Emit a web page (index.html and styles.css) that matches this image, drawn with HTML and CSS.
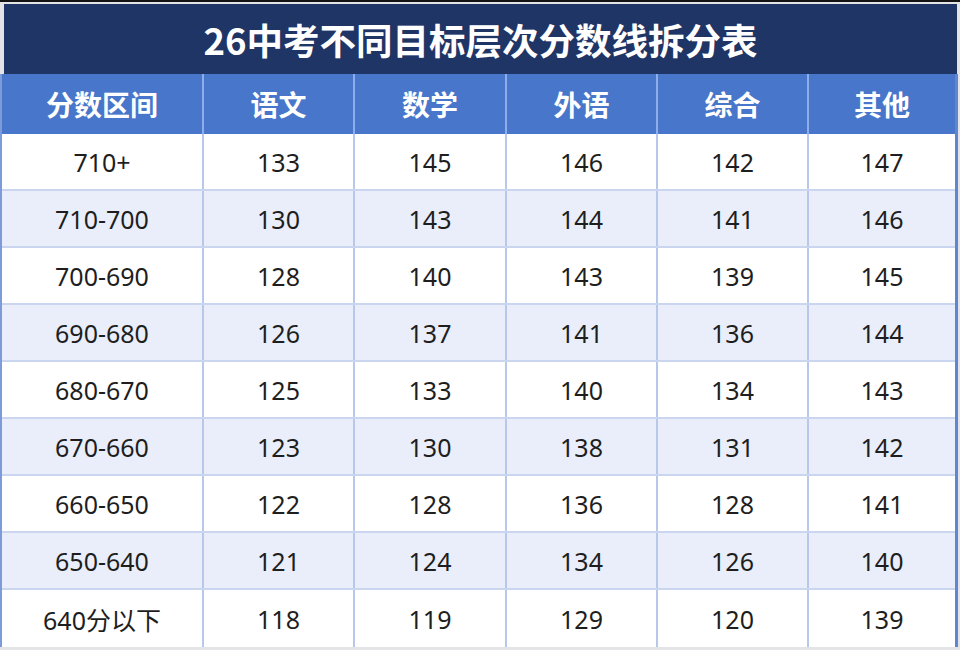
FILE: index.html
```html
<!DOCTYPE html>
<html lang="zh-CN">
<head>
<meta charset="utf-8">
<title>26中考不同目标层次分数线拆分表</title>
<link rel="stylesheet" href="styles.css">
</head>
<body>
<div class="page">
  <div class="title">26中考不同目标层次分数线拆分表</div>
  <div class="table">
    <div class="row head">
      <div class="cell">分数区间</div><div class="cell">语文</div><div class="cell">数学</div><div class="cell">外语</div><div class="cell">综合</div><div class="cell">其他</div>
    </div>
    <div class="row">
      <div class="cell">710+</div><div class="cell">133</div><div class="cell">145</div><div class="cell">146</div><div class="cell">142</div><div class="cell">147</div>
    </div>
    <div class="row alt">
      <div class="cell">710-700</div><div class="cell">130</div><div class="cell">143</div><div class="cell">144</div><div class="cell">141</div><div class="cell">146</div>
    </div>
    <div class="row">
      <div class="cell">700-690</div><div class="cell">128</div><div class="cell">140</div><div class="cell">143</div><div class="cell">139</div><div class="cell">145</div>
    </div>
    <div class="row alt">
      <div class="cell">690-680</div><div class="cell">126</div><div class="cell">137</div><div class="cell">141</div><div class="cell">136</div><div class="cell">144</div>
    </div>
    <div class="row">
      <div class="cell">680-670</div><div class="cell">125</div><div class="cell">133</div><div class="cell">140</div><div class="cell">134</div><div class="cell">143</div>
    </div>
    <div class="row alt">
      <div class="cell">670-660</div><div class="cell">123</div><div class="cell">130</div><div class="cell">138</div><div class="cell">131</div><div class="cell">142</div>
    </div>
    <div class="row">
      <div class="cell">660-650</div><div class="cell">122</div><div class="cell">128</div><div class="cell">136</div><div class="cell">128</div><div class="cell">141</div>
    </div>
    <div class="row alt">
      <div class="cell">650-640</div><div class="cell">121</div><div class="cell">124</div><div class="cell">134</div><div class="cell">126</div><div class="cell">140</div>
    </div>
    <div class="row last">
      <div class="cell">640分以下</div><div class="cell">118</div><div class="cell">119</div><div class="cell">129</div><div class="cell">120</div><div class="cell">139</div>
    </div>
  </div>
</div>
</body>
</html>
```
FILE: styles.css
```css
html, body {
  margin: 0;
  padding: 0;
  background: #e4e4e6;
}
.page {
  width: 960px;
  height: 650px;
  box-sizing: border-box;
  border-top: 2px solid #141414;
  padding-top: 2px;
  background: #e4e4e6;
  font-family: "Noto Sans", "Noto Sans CJK SC", sans-serif;
  overflow: hidden;
}
.title {
  margin-left: 4px;
  margin-right: 3px;
  height: 70px;
  background: #1f3566;
  color: #ffffff;
  font-family: "Noto Sans CJK SC", sans-serif;
  font-weight: 700;
  font-size: 36.5px;
  display: flex;
  align-items: center;
  justify-content: center;
}
.table {
  width: 958px;
  border-left: 2px solid #7d9bd8;
  border-right: 3px solid #5f86d2;
  box-sizing: border-box;
  background: #ffffff;
}
.row {
  display: grid;
  grid-template-columns: 200px 151px 152px 151px 151px 148px;
  height: 57px;
  box-sizing: border-box;
  border-bottom: 2px solid #cad6f0;
  background: #ffffff;
}
.row.alt {
  background: #e9eefa;
}
.row.last {
  border-bottom: none;
}
.row.head {
  height: 60px;
  background: #4776ca;
  border-bottom: none;
}
.cell {
  display: flex;
  align-items: center;
  justify-content: center;
  font-size: 25px;
  color: #1e1e1e;
  border-left: 2px solid #b8c8ea;
  white-space: nowrap;
}
.cell:first-child {
  border-left: none;
}
.head .cell {
  color: #ffffff;
  font-family: "Noto Sans CJK SC", sans-serif;
  font-weight: 700;
  font-size: 28px;
  border-left: 2px solid #8fadea;
}
.head .cell:first-child {
  border-left: none;
}
```
